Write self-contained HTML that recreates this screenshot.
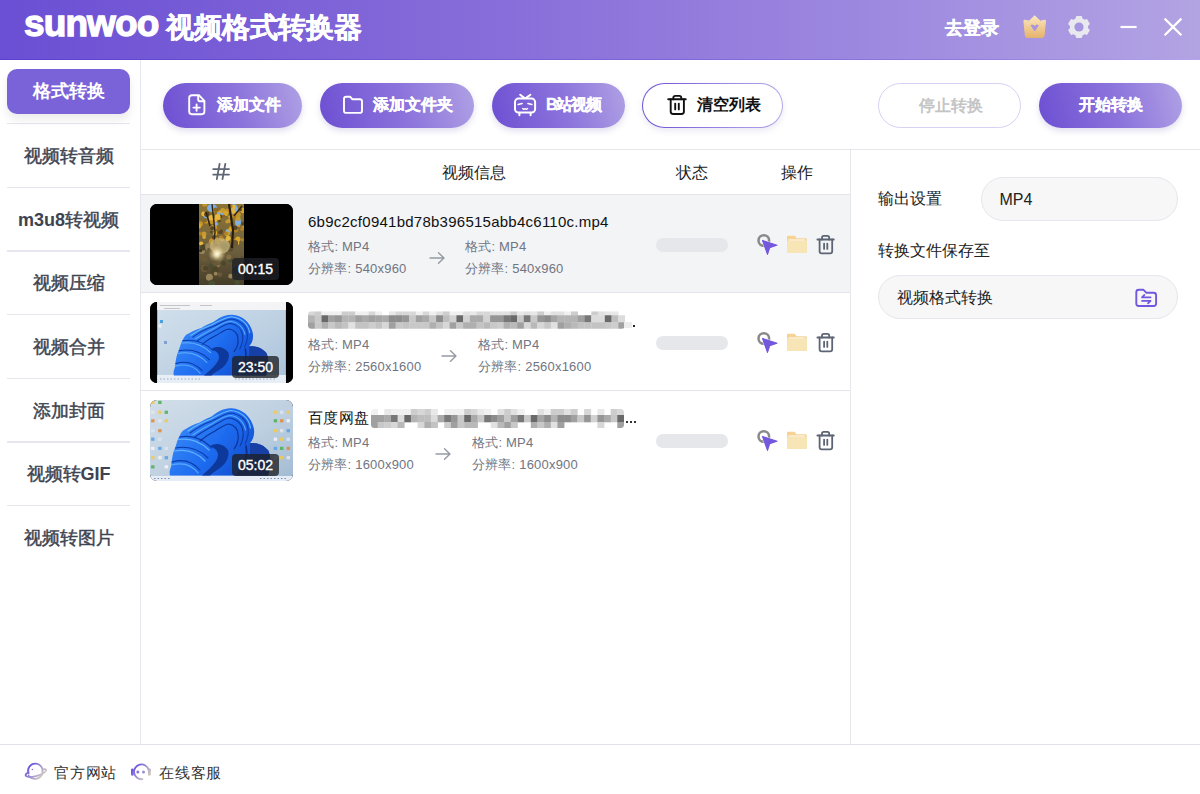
<!DOCTYPE html>
<html><head><meta charset="utf-8">
<style>
*{margin:0;padding:0;box-sizing:border-box}
html,body{width:1200px;height:794px;overflow:hidden;background:#fff;font-family:"Liberation Sans",sans-serif;position:relative}
.abs{position:absolute}
#hdr{left:0;top:0;width:1200px;height:60px;background:linear-gradient(90deg,#6b4fd4 0%,#8a70da 45%,#9f8be0 75%,#b2a3e3 100%)}
#hdr:after{content:"";position:absolute;left:0;top:59px;width:1200px;height:1px;background:linear-gradient(90deg,#5a3ecf,#7a62d8 50%,#8f7ade 80%,#b4a6ea)}
.logo{left:24px;top:2px;color:#fff;font-weight:bold;font-size:37px;line-height:44px;letter-spacing:-0.9px;white-space:nowrap;-webkit-text-stroke:1.3px #fff}
.title{left:166px;top:12px;color:#fff;font-weight:bold;font-size:28px;white-space:nowrap;line-height:32px;-webkit-text-stroke:0.4px #fff}
.login{left:945px;top:17px;color:#fff;font-weight:bold;font-size:18px;line-height:22px;-webkit-text-stroke:0.4px #fff}
#side{left:0;top:60px;width:141px;height:684px;border-right:1px solid #e6e6ee}
.nav{left:7px;width:123px;height:64px;text-align:center;font-size:18px;font-weight:500;color:#3d4350;-webkit-text-stroke:0.45px #3d4350;line-height:66px}
.nav.act{top:9px;height:45px;line-height:45px;background:#7a62d8;color:#fff;font-weight:bold;-webkit-text-stroke:0;border-radius:10px;border:none;box-shadow:0 6px 10px rgba(0,0,0,0.08)}
.btn{top:83px;height:45px;border-radius:23px;color:#fff;font-size:16px;font-weight:bold;background:linear-gradient(75deg,#6c4fd2 0%,#8c74dc 55%,#b0a1e4 100%);box-shadow:0 3px 6px rgba(90,70,160,0.18);white-space:nowrap}
.btn span{position:absolute;top:12px;line-height:20px;-webkit-text-stroke:0.3px #fff}
svg{display:block}
.btn svg{position:absolute}
.obtn{top:83px;height:45px;border-radius:23px;background:#fff;white-space:nowrap}
.th{top:164px;font-size:16px;color:#222;line-height:18px}
.row{left:141px;width:709px;height:98px;border-bottom:1.5px solid #e3e5ea}
.thumb{left:9px;top:9px;width:143px;height:81px;border-radius:7px;overflow:hidden;background:#000}
.fname{left:167px;top:17px;font-size:15px;color:#111;line-height:20px;white-space:nowrap;letter-spacing:0.25px}
.meta{font-size:13px;color:#707582;line-height:16px;white-space:nowrap;letter-spacing:0.2px}
.dur{position:absolute;left:82px;top:54px;width:47px;height:22px;border-radius:4px;background:rgba(30,32,38,0.78);color:#fff;font-size:14px;line-height:22px;text-align:center;-webkit-text-stroke:0.35px #fff}
.prog{left:515px;top:43px;width:72px;height:14px;border-radius:7px;background:#e5e7eb}
.act svg{position:absolute}
#rp{left:850px;top:149px;width:350px;height:595px;border-left:1.5px solid #e5e7eb}
.lbl{font-size:16px;color:#222;line-height:20px;white-space:nowrap}
.inp{height:44px;border-radius:22px;background:#f7f7f8;border:1px solid #e6e6ec}
#foot{left:0;top:744px;width:1200px;height:50px;border-top:1.5px solid #e2e2ec}
.ft{top:764px;font-size:15px;color:#333;line-height:18px;letter-spacing:0.8px}
</style></head><body>
<svg width="0" height="0" style="position:absolute"><defs>
<filter id="blur1" x="-5%" y="-30%" width="110%" height="160%"><feGaussianBlur stdDeviation="0.6"/></filter>
<linearGradient id="crownG" x1="0" y1="0" x2="0" y2="1"><stop offset="0" stop-color="#fbe7bf"/><stop offset="1" stop-color="#e6b46e"/></linearGradient>
<linearGradient id="ftG" gradientUnits="userSpaceOnUse" x1="6" y1="5" x2="25" y2="22"><stop offset="0.2" stop-color="#6f55dc"/><stop offset="0.55" stop-color="#a99bd0"/><stop offset="0.9" stop-color="#dcd8b8"/></linearGradient>
</defs></svg>

<div id="hdr" class="abs">
  <div class="abs logo">sunwoo</div>
  <div class="abs title">视频格式转换器</div>
  <div class="abs login">去登录</div>
  <svg class="abs" style="left:1015px;top:10px" width="40" height="35" viewBox="0 0 40 35">
    <path d="M9.4 10.2 Q12 10.4 14 11.2 Q17 8.4 19.7 5.8 Q22.4 8.4 25.4 11.2 Q27.4 10.4 30 10.2 Q30.6 10.2 30.5 10.8 L29 25.8 Q28.8 27.4 27.2 27.4 H12.2 Q10.6 27.4 10.4 25.8 L8.9 10.8 Q8.8 10.2 9.4 10.2 Z" fill="url(#crownG)" stroke="url(#crownG)" stroke-width="1" stroke-linejoin="round"/>
    <path d="M16.4 15.4 L19.7 20.4 L23 15.4 L21.2 15.4 L19.7 17.2 L18.2 15.4 Z" fill="#a795e2" stroke="#a795e2" stroke-width="1.3" stroke-linejoin="round"/>
  </svg>
  <svg class="abs" style="left:1066px;top:14px" width="26" height="26" viewBox="-13 -13 26 26">
    <g fill="#e8e8ee">
      <path id="gear" d="M4.00 -6.93 L2.60 -7.56 L2.10 -9.88 L-2.10 -9.88 L-2.60 -7.56 L-4.00 -6.93 L-5.25 -6.04 L-7.51 -6.76 L-9.61 -3.12 L-7.85 -1.53 L-8.00 0.00 L-7.85 1.53 L-9.61 3.12 L-7.51 6.76 L-5.25 6.04 L-4.00 6.93 L-2.60 7.56 L-2.10 9.88 L2.10 9.88 L2.60 7.56 L4.00 6.93 L5.25 6.04 L7.51 6.76 L9.61 3.12 L7.85 1.53 L8.00 0.00 L7.85 -1.53 L9.61 -3.12 L7.51 -6.76 L5.25 -6.04 Z" stroke="#e8e8ee" stroke-width="2.2" stroke-linejoin="round"/>
    </g>
    <circle r="4.6" fill="#a696e2"/>
  </svg>
  <svg class="abs" style="left:1115px;top:15px" width="75" height="28" viewBox="0 0 75 28">
    <path d="M5.5 12 H21.6" stroke="#fff" stroke-width="2.2"/>
    <path d="M49.6 3.6 L66.4 20.2 M66.4 3.6 L49.6 20.2" stroke="#fff" stroke-width="2.2"/>
  </svg>
</div>

<div id="side" class="abs">
  <div class="abs" style="left:7px;top:63.0px;width:123px;height:1.3px;background:#e6e7ee"></div><div class="abs" style="left:7px;top:126.7px;width:123px;height:1.3px;background:#e6e7ee"></div><div class="abs" style="left:7px;top:190.3px;width:123px;height:1.3px;background:#e6e7ee"></div><div class="abs" style="left:7px;top:254.0px;width:123px;height:1.3px;background:#e6e7ee"></div><div class="abs" style="left:7px;top:317.7px;width:123px;height:1.3px;background:#e6e7ee"></div><div class="abs" style="left:7px;top:381.4px;width:123px;height:1.3px;background:#e6e7ee"></div><div class="abs" style="left:7px;top:445.0px;width:123px;height:1.3px;background:#e6e7ee"></div>
  <div class="abs nav act">格式转换</div>
  <div class="abs nav" style="top:63px">视频转音频</div>
  <div class="abs nav" style="top:127px"><b style="-webkit-text-stroke:0">m3u8</b>转视频</div>
  <div class="abs nav" style="top:190px">视频压缩</div>
  <div class="abs nav" style="top:254px">视频合并</div>
  <div class="abs nav" style="top:318px">添加封面</div>
  <div class="abs nav" style="top:381px">视频转<b style="-webkit-text-stroke:0">GIF</b></div>
  <div class="abs nav" style="top:445px;border-bottom:none">视频转图片</div>
</div>

<div class="abs btn" style="left:163px;width:139px">
  <svg style="left:20px;top:7px" width="30" height="30" viewBox="0 0 30 30" fill="none" stroke="#fff" stroke-width="1.9" stroke-linejoin="round" stroke-linecap="round">
    <path d="M9 5.2 H15.9 L21.4 10.9 V21.6 Q21.4 24.2 18.8 24.2 H8.8 Q6.2 24.2 6.2 21.6 V7.8 Q6.2 5.2 9 5.2 Z"/>
    <path d="M15.2 5.6 V9.6 Q15.2 11.3 16.9 11.3 H21"/>
    <path d="M13.6 14.4 V20.8 M10.4 17.6 H16.8"/>
  </svg>
  <span style="left:54px">添加文件</span></div>
<div class="abs btn" style="left:320px;width:154px">
  <svg style="left:18px;top:7px" width="30" height="30" viewBox="0 0 30 30" fill="none" stroke="#fff" stroke-width="1.9" stroke-linejoin="round">
    <path d="M6 9 Q6 6.8 8.2 6.8 H12.3 L14.4 9.3 H21.8 Q24 9.3 24 11.5 V20.7 Q24 22.9 21.8 22.9 H8.2 Q6 22.9 6 20.7 Z"/>
  </svg>
  <span style="left:53px">添加文件夹</span></div>
<div class="abs btn" style="left:492px;width:133px">
  <svg style="left:18px;top:7px" width="30" height="30" viewBox="0 0 30 30" fill="none" stroke="#fff" stroke-width="2" stroke-linecap="round" stroke-linejoin="round">
    <rect x="5" y="8.6" width="20.1" height="14" rx="3.5"/>
    <path d="M10.2 4.7 L14.2 7.9 M20.4 4.7 L16.2 7.9"/>
    <path d="M8.2 14.5 L12 13.5 M18 13.5 L21.8 14.5" stroke-width="1.7"/>
    <path d="M12.6 18.4 L13.8 19.4 L15.1 18.6 L16.4 19.4 L17.6 18.4" stroke-width="1.3"/>
    <path d="M9.4 23 V25.2 M20.6 23 V25.2" stroke-width="2"/>
  </svg>
  <span style="left:54px;letter-spacing:-1.2px">B站视频</span></div>
<div class="abs obtn" style="left:642px;width:141px;border:1.6px solid transparent;background:linear-gradient(#fff,#fff) padding-box,linear-gradient(90deg,#6a4ed6,#9c88e4 60%,#b4a6ea) border-box;box-shadow:0 3px 6px rgba(90,70,160,0.12);color:#111;font-size:16px;font-weight:bold">
  <svg class="abs" style="left:18.5px;top:5.5px" width="30" height="30" viewBox="0 0 30 30" fill="none" stroke="#111" stroke-width="1.9" stroke-linecap="round" stroke-linejoin="round">
    <path d="M6.2 9.3 H23.8"/>
    <path d="M11.3 9.3 V8 Q11.3 5.9 13.4 5.9 H17.2 Q19.3 5.9 19.3 8 V9.3"/>
    <path d="M8.7 9.3 V21.5 Q8.7 24 11.2 24 H19.4 Q21.9 24 21.9 21.5 V9.3"/>
    <path d="M13.2 13.6 V19.4 M16.8 13.6 V19.4"/>
  </svg>
  <span class="abs" style="left:54px;top:11px;line-height:20px">清空列表</span></div>
<div class="abs obtn" style="left:878px;width:143px;border:1px solid #d9d0f5;color:#c4c4c4;font-size:16px;font-weight:bold"><span class="abs" style="left:40px;top:12px;line-height:20px">停止转换</span></div>
<div class="abs btn" style="left:1039px;width:143px"><span style="left:40px">开始转换</span></div>

<div class="abs" style="left:141px;top:148.5px;width:1059px;height:1.5px;background:#e5e7eb"></div>
<div class="abs" style="left:141px;top:193.5px;width:709px;height:1.5px;background:#e3e5ea"></div>
<svg class="abs" style="left:200px;top:155px" width="40" height="35" viewBox="0 0 40 35" stroke="#5f6675" stroke-width="1.8" stroke-linecap="round">
  <path d="M19.6 8.8 L16.8 24.2 M25.3 8.8 L22.5 24.2 M13.2 14.1 H29 M13.2 19.6 H29"/>
</svg>
<div class="abs th" style="left:442px">视频信息</div>
<div class="abs th" style="left:676px">状态</div>
<div class="abs th" style="left:781px">操作</div>

<div class="abs row" style="top:195px;background:#f3f4f6">
  <div class="abs thumb"><svg width="143" height="81" viewBox="0 0 143 81">
<defs>
<linearGradient id="au" x1="0" y1="0" x2="0" y2="1"><stop offset="0" stop-color="#8f7632"/><stop offset="0.35" stop-color="#7c6a3a"/><stop offset="0.6" stop-color="#6a5c3c"/><stop offset="1" stop-color="#403a26"/></linearGradient>
<radialGradient id="sun"><stop offset="0" stop-color="#fffcec"/><stop offset="0.3" stop-color="#f6e8b8" stop-opacity="0.9"/><stop offset="1" stop-color="#c8b070" stop-opacity="0"/></radialGradient>
<filter id="tb1" x="0" y="0" width="143" height="81" filterUnits="userSpaceOnUse"><feGaussianBlur stdDeviation="0.65"/></filter>
<clipPath id="strip"><rect x="49" y="0" width="45" height="81"/></clipPath>
</defs>
<rect width="143" height="81" fill="#000"/>
<g clip-path="url(#strip)"><g filter="url(#tb1)">
<rect x="40" y="-5" width="60" height="90" fill="url(#au)"/>
<ellipse cx="62" cy="4" rx="5" ry="4" fill="#7fb0e6"/><ellipse cx="70" cy="10" rx="3" ry="3" fill="#7fb0e6"/><ellipse cx="84" cy="6" rx="4" ry="6" fill="#7fb0e6"/><ellipse cx="88" cy="18" rx="3" ry="5" fill="#7fb0e6"/><ellipse cx="66" cy="20" rx="2" ry="2" fill="#7fb0e6"/><ellipse cx="78" cy="28" rx="2.5" ry="3" fill="#7fb0e6"/><ellipse cx="56" cy="14" rx="2" ry="3" fill="#7fb0e6"/>
<circle cx="77.0" cy="29.7" r="2.5" fill="#c89a30"/><circle cx="82.3" cy="36.9" r="1.2" fill="#e6b83c"/><circle cx="83.9" cy="10.0" r="1.3" fill="#c4942a"/><circle cx="54.1" cy="18.8" r="1.6" fill="#8a6a2a"/><circle cx="53.6" cy="10.0" r="2.4" fill="#e6b83c"/><circle cx="61.6" cy="36.7" r="2.4" fill="#c4942a"/><circle cx="83.3" cy="2.9" r="2.2" fill="#e6b83c"/><circle cx="54.7" cy="0.1" r="2.6" fill="#c4942a"/><circle cx="83.8" cy="38.4" r="1.5" fill="#c4942a"/><circle cx="62.0" cy="38.5" r="2.1" fill="#5a4420"/><circle cx="77.2" cy="7.3" r="2.7" fill="#c4942a"/><circle cx="92.5" cy="35.7" r="1.7" fill="#b08224"/><circle cx="67.7" cy="37.4" r="1.6" fill="#b08224"/><circle cx="62.6" cy="24.1" r="1.2" fill="#5a4420"/><circle cx="80.8" cy="2.6" r="1.8" fill="#b08224"/><circle cx="70.6" cy="12.6" r="2.0" fill="#5a4420"/><circle cx="56.9" cy="10.2" r="2.7" fill="#5a4420"/><circle cx="65.1" cy="16.2" r="2.1" fill="#e6b83c"/><circle cx="65.5" cy="23.1" r="1.2" fill="#d8a82c"/><circle cx="80.8" cy="24.9" r="2.7" fill="#d8a82c"/><circle cx="83.0" cy="37.2" r="2.7" fill="#b08224"/><circle cx="72.1" cy="35.7" r="1.6" fill="#e6b83c"/><circle cx="53.9" cy="29.9" r="2.5" fill="#c89a30"/><circle cx="62.3" cy="17.3" r="2.8" fill="#c4942a"/><circle cx="64.3" cy="24.4" r="2.7" fill="#b08224"/><circle cx="61.4" cy="28.1" r="1.3" fill="#5a4420"/><circle cx="63.3" cy="7.1" r="1.3" fill="#c4942a"/><circle cx="81.5" cy="12.4" r="2.0" fill="#5a4420"/><circle cx="51.2" cy="39.5" r="2.1" fill="#e6b83c"/><circle cx="50.4" cy="29.6" r="1.8" fill="#b08224"/><circle cx="69.5" cy="16.9" r="1.3" fill="#5a4420"/><circle cx="50.5" cy="19.7" r="2.5" fill="#c4942a"/><circle cx="93.2" cy="22.6" r="1.4" fill="#c89a30"/><circle cx="67.6" cy="6.8" r="1.8" fill="#d8a82c"/><circle cx="87.0" cy="11.8" r="1.9" fill="#8a6a2a"/><circle cx="87.4" cy="39.0" r="1.9" fill="#e6b83c"/><circle cx="80.0" cy="12.7" r="1.6" fill="#e6b83c"/><circle cx="67.2" cy="5.9" r="1.8" fill="#8a6a2a"/><circle cx="92.2" cy="25.1" r="2.0" fill="#b08224"/><circle cx="57.1" cy="19.7" r="2.0" fill="#8a6a2a"/><circle cx="88.0" cy="14.5" r="2.5" fill="#c89a30"/><circle cx="65.0" cy="23.5" r="1.3" fill="#b08224"/><circle cx="65.4" cy="28.2" r="1.6" fill="#e6b83c"/><circle cx="60.9" cy="39.2" r="2.3" fill="#b08224"/><circle cx="78.2" cy="23.2" r="1.2" fill="#8a6a2a"/><circle cx="83.8" cy="13.0" r="1.6" fill="#b08224"/><circle cx="85.8" cy="25.9" r="2.5" fill="#b08224"/><circle cx="61.3" cy="13.8" r="2.7" fill="#e6b83c"/><circle cx="64.8" cy="33.7" r="2.6" fill="#5a4420"/><circle cx="69.2" cy="14.6" r="1.7" fill="#c4942a"/><circle cx="72.8" cy="6.6" r="2.5" fill="#c89a30"/><circle cx="70.5" cy="27.7" r="2.4" fill="#5a4420"/><circle cx="67.7" cy="24.7" r="2.7" fill="#8a6a2a"/><circle cx="79.0" cy="16.8" r="2.2" fill="#c89a30"/><circle cx="88.0" cy="10.8" r="2.8" fill="#c4942a"/><circle cx="56.2" cy="17.6" r="2.2" fill="#c4942a"/><circle cx="83.2" cy="7.2" r="2.3" fill="#e6b83c"/><circle cx="93.1" cy="6.6" r="2.6" fill="#d8a82c"/><circle cx="63.3" cy="7.3" r="1.5" fill="#d8a82c"/><circle cx="67.7" cy="14.0" r="2.3" fill="#d8a82c"/><circle cx="75.6" cy="9.5" r="2.6" fill="#d8a82c"/><circle cx="64.8" cy="38.1" r="2.6" fill="#c89a30"/><circle cx="54.2" cy="33.3" r="1.8" fill="#d8a82c"/><circle cx="73.7" cy="12.1" r="1.7" fill="#8a6a2a"/><circle cx="64.3" cy="23.2" r="2.7" fill="#c89a30"/><circle cx="54.8" cy="16.4" r="2.1" fill="#8a6a2a"/><circle cx="65.6" cy="5.7" r="2.2" fill="#8a6a2a"/><circle cx="70.5" cy="8.0" r="1.4" fill="#d8a82c"/><circle cx="64.8" cy="35.7" r="1.2" fill="#d8a82c"/><circle cx="63.7" cy="36.7" r="2.1" fill="#b08224"/><circle cx="77.3" cy="35.7" r="1.8" fill="#e6b83c"/><circle cx="93.0" cy="19.7" r="2.0" fill="#5a4420"/><circle cx="66.1" cy="38.4" r="2.7" fill="#8a6a2a"/><circle cx="75.7" cy="29.6" r="1.7" fill="#b08224"/><circle cx="67.7" cy="12.8" r="2.8" fill="#e6b83c"/><circle cx="90.8" cy="5.7" r="1.2" fill="#5a4420"/><circle cx="77.0" cy="17.7" r="1.7" fill="#c89a30"/><circle cx="55.1" cy="15.7" r="2.0" fill="#8a6a2a"/><circle cx="61.3" cy="37.4" r="2.5" fill="#c4942a"/><circle cx="71.1" cy="33.8" r="2.4" fill="#b08224"/><circle cx="62.2" cy="24.3" r="2.0" fill="#5a4420"/><circle cx="87.9" cy="35.2" r="2.6" fill="#d8a82c"/><circle cx="83.2" cy="12.0" r="2.1" fill="#b08224"/><circle cx="76.6" cy="29.3" r="1.2" fill="#b08224"/><circle cx="65.2" cy="29.8" r="2.1" fill="#d8a82c"/><circle cx="49.1" cy="22.1" r="2.3" fill="#d8a82c"/><circle cx="89.0" cy="21.8" r="1.2" fill="#c89a30"/><circle cx="85.3" cy="23.8" r="2.3" fill="#5a4420"/><circle cx="78.2" cy="34.3" r="2.5" fill="#e6b83c"/><circle cx="66.6" cy="34.1" r="1.5" fill="#b08224"/>
<circle cx="69.9" cy="70.6" r="2.3" fill="#6a5a38"/><circle cx="80.3" cy="56.6" r="2.2" fill="#4a5030"/><circle cx="70.3" cy="51.4" r="1.9" fill="#98845a"/><circle cx="73.7" cy="59.4" r="2.3" fill="#4c442a"/><circle cx="68.2" cy="61.3" r="1.6" fill="#98845a"/><circle cx="59.4" cy="73.2" r="3.5" fill="#98845a"/><circle cx="91.4" cy="52.3" r="2.6" fill="#6a5a38"/><circle cx="93.9" cy="68.2" r="1.6" fill="#4a5030"/><circle cx="54.5" cy="64.4" r="3.6" fill="#6a5a38"/><circle cx="81.1" cy="43.8" r="2.2" fill="#3c3822"/><circle cx="55.7" cy="64.3" r="2.5" fill="#4c442a"/><circle cx="52.0" cy="47.2" r="2.9" fill="#98845a"/><circle cx="66.1" cy="41.1" r="1.6" fill="#5a4e30"/><circle cx="54.3" cy="55.1" r="3.1" fill="#6a5a38"/><circle cx="68.4" cy="51.5" r="3.0" fill="#3c3822"/><circle cx="64.9" cy="66.2" r="3.8" fill="#4c442a"/><circle cx="80.4" cy="44.5" r="3.1" fill="#5a4e30"/><circle cx="62.1" cy="78.5" r="2.9" fill="#4c442a"/><circle cx="60.8" cy="61.7" r="2.1" fill="#4a5030"/><circle cx="61.8" cy="79.9" r="3.5" fill="#4a5030"/><circle cx="65.7" cy="69.7" r="1.9" fill="#98845a"/><circle cx="49.8" cy="52.7" r="2.9" fill="#6a5a38"/><circle cx="53.1" cy="43.4" r="3.0" fill="#4c442a"/><circle cx="66.5" cy="57.9" r="3.9" fill="#6a5a38"/><circle cx="84.8" cy="39.3" r="3.3" fill="#6a5a38"/><circle cx="87.2" cy="78.6" r="2.6" fill="#4a5030"/><circle cx="59.0" cy="43.0" r="3.9" fill="#98845a"/><circle cx="71.1" cy="47.1" r="3.3" fill="#3c3822"/><circle cx="64.9" cy="48.1" r="2.3" fill="#5a4e30"/><circle cx="80.7" cy="72.2" r="2.4" fill="#98845a"/><circle cx="86.4" cy="65.9" r="3.5" fill="#3c3822"/><circle cx="92.3" cy="53.6" r="1.6" fill="#5a4e30"/><circle cx="58.7" cy="45.8" r="1.7" fill="#6a5a38"/><circle cx="50.5" cy="46.7" r="1.6" fill="#3c3822"/><circle cx="78.8" cy="53.0" r="2.6" fill="#847046"/><circle cx="89.0" cy="64.6" r="2.6" fill="#3c3822"/><circle cx="69.8" cy="46.2" r="3.1" fill="#6a5a38"/><circle cx="65.9" cy="54.6" r="3.7" fill="#4c442a"/><circle cx="73.8" cy="42.7" r="3.5" fill="#4a5030"/><circle cx="61.9" cy="48.1" r="2.7" fill="#6a5a38"/>
<path d="M62 0 L65 28 L64 40 M84 12 L92 2 M56 8 L60 22" stroke="#2e2212" stroke-width="1.4" fill="none"/><path d="M79 0 L83 26 L82 44" stroke="#2a1e10" stroke-width="2.2" fill="none"/>
<ellipse cx="70" cy="42" rx="10" ry="8" fill="#c8b47c" opacity="0.75"/>
<circle cx="67" cy="50" r="9" fill="url(#sun)"/>
</g></g>
</svg><div class="dur">00:15</div></div>
  <div class="abs fname">6b9c2cf0941bd78b396515abb4c6110c.mp4</div>
  <div class="abs meta" style="left:167px;top:44px">格式: MP4</div>
  <div class="abs meta" style="left:167px;top:66px">分辨率: 540x960</div>
  <svg class="abs" style="left:286px;top:55px" width="20" height="16" viewBox="0 0 20 16" fill="none" stroke="#959aa4" stroke-width="1.4" stroke-linecap="round" stroke-linejoin="round"><path d="M3 8 H17 M11.5 2.8 L17 8 L11.5 13.2"/></svg>
  <div class="abs meta" style="left:324px;top:44px">格式: MP4</div>
  <div class="abs meta" style="left:324px;top:66px">分辨率: 540x960</div>
  <div class="abs prog"></div>
  <div class="act">
<svg style="left:610px;top:33px" width="32" height="32" viewBox="0 0 32 32">
  <circle cx="12.8" cy="12.5" r="5.3" fill="none" stroke="#8a8a8a" stroke-width="2.5"/>
  <path d="M11.3 12.3 L26.3 17.2 L18.8 19.8 L16.5 26.8 Z" fill="#7357dd" stroke="#fff" stroke-width="1.6" stroke-linejoin="round" paint-order="stroke"/>
  <path d="M11.3 12.3 L26.3 17.2 L18.8 19.8 L16.5 26.8 Z" fill="#7357dd" stroke="#7357dd" stroke-width="0.8" stroke-linejoin="round"/>
</svg>
<svg style="left:641px;top:33px" width="30" height="30" viewBox="0 0 30 30">
  <path d="M5 8.5 Q5 7.7 5.8 7.7 H12.8 L14.5 10.2 H24 Q24.7 10.2 24.7 11 V24.3 Q24.7 25 24 25 H5.8 Q5 25 5 24.3 Z" fill="#f5d394"/>
  <rect x="5" y="12.8" width="19.7" height="12.2" rx="0.6" fill="#f7e5b5"/>
  <path d="M6.5 12 H23" stroke="#fbf3e0" stroke-width="1.4"/>
</svg>
<svg style="left:641px;top:33px" width="60" height="30" viewBox="0 0 60 30" fill="none" stroke="#5d6574" stroke-width="1.8" stroke-linecap="round" stroke-linejoin="round">
  <path d="M35.4 11.5 H51.8"/>
  <path d="M40 11.5 V9.7 Q40 7.9 41.8 7.9 H45.4 Q47.2 7.9 47.2 9.7 V11.5"/>
  <path d="M37.6 11.5 V23.3 Q37.6 25.4 39.7 25.4 H48.1 Q50.2 25.4 50.2 23.3 V11.5"/>
  <path d="M42.1 15.6 V20.9 M45.3 15.6 V20.9"/>
</svg>
</div>
</div>
<div class="abs row" style="top:293px">
  <div class="abs thumb"><svg width="143" height="81" viewBox="0 0 143 81">
<defs><linearGradient id="wp2" x1="0" y1="0" x2="1" y2="1"><stop offset="0" stop-color="#d3e0ec"/><stop offset="0.6" stop-color="#bcd0e2"/><stop offset="1" stop-color="#a9c2da"/></linearGradient>
<filter id="tb" x="0" y="0" width="143" height="81" filterUnits="userSpaceOnUse"><feGaussianBlur stdDeviation="0.55"/></filter><linearGradient id="bloomG" gradientUnits="userSpaceOnUse" x1="25" y1="15" x2="105" y2="75"><stop offset="0" stop-color="#3a8cfa"/><stop offset="0.5" stop-color="#1f6cf0"/><stop offset="1" stop-color="#1046c8"/></linearGradient></defs>
<rect width="143" height="81" fill="#000"/>
<g filter="url(#tb)">
<rect x="7.2" y="0" width="128.7" height="81" fill="url(#wp2)"/>
<rect x="7.2" y="0" width="128.7" height="8" fill="#f4f4f6"/>
<path d="M10 3.5 H40 M50 3.5 H62 M14 6.5 H30" stroke="#b8b8c0" stroke-width="0.8"/>
<rect x="7.2" y="73" width="128.7" height="8" fill="#e8eef6"/>
<path d="M10 77 H50 M85 77 H125" stroke="#9aa8c0" stroke-width="1.2" stroke-dasharray="1.5 2"/>
<rect x="10" y="18" width="3" height="3" fill="#4aa0e0"/><rect x="8.5" y="22.5" width="3" height="3" fill="#f0f0f0"/><rect x="14" y="39" width="3" height="3" fill="#80a0d0"/>
<g transform="translate(25,12.8) scale(0.941,0.905) translate(-21.2,-8.3)">
<path d="M82 8.3 C92 9 101 16 103.8 28 C105 35 103 40 99.7 43.4 C106 42 114 45 118.3 50.6 C121 56 121 66 118 75.4 L20 75.4 C19 72 20 70 21.2 66 C22 58 23 52 25.3 47.6 C27 42 28 38 29.5 36.2 C31 32 33 30 35.7 29 C40 26 45 24 49.1 22.8 C54 20 58 18 61.5 16.6 C66 13 70 10.5 73 9.5 C76 8.6 79 8.3 82 8.3 Z" fill="url(#bloomG)"/>
<path d="M99.7 43.4 C106 42 114 45 118.3 50.6 C121 56 121 66 118 75.4 L86 75.4 C96 68 102 56 99.7 43.4 Z" fill="#173fa6"/>
<path d="M60 46 C66 42 74 44 78 50 C80 56 76 64 70 68 C66 71 62 73 60 75.4 L52 75.4 C58 70 68 62 68 55 C68 50 64 48 60 46 Z" fill="#0c3494" opacity="0.9"/>
<g fill="none" stroke-linecap="round">
<path d="M40 33 C48 27 56 23 62 21 C70 17 76 13 81 13 C90 14 97 20 98 29 C99 35 97 40 95 44" stroke="#0d3eb0" stroke-width="1.1"/>
<path d="M45 37 C52 32 58 29 63 26 C70 22 75 18 80 18 C87 19 92 24 93 31 C94 37 92 42 90 46" stroke="#0b3aa8" stroke-width="1.1"/>
<path d="M50 41 C56 36 61 33 65 31 C70 28 75 24 79 24 C84 25 88 29 88 34 C89 40 87 45 84 49" stroke="#0a359c" stroke-width="1.2"/>
<path d="M38 31 C46 25.5 54 21.5 61 19 C68 15 75 11 81 10.5 C91 11.5 99 18 100.5 28" stroke="#6ab8ff" stroke-width="1.2"/>
<path d="M43 35 C50 30 57 26.5 62.5 23.5 C69 19.5 75 15.5 80.5 15.5 C88 16.5 94 22 95.5 30" stroke="#58a8ff" stroke-width="1.1"/>
<path d="M29.5 37 C40 35 52 38 62 48" stroke="#0b3aa8" stroke-width="1.1"/>
<path d="M25.5 48 C36 46 48 48 58 58" stroke="#0b3aa8" stroke-width="1.1"/>
<path d="M22 62 C32 59 42 61 50 70" stroke="#0b3aa8" stroke-width="1.1"/>
<path d="M28.5 39.5 C39 38 50 41 59 50" stroke="#62b0ff" stroke-width="1.2"/>
<path d="M24.5 51 C35 49 46 51 55 61" stroke="#62b0ff" stroke-width="1.2"/>
<path d="M21.5 65 C31 62.5 41 64 48 73" stroke="#5aaaff" stroke-width="1.2"/>
<path d="M96 46 C98 56 95 66 88 74" stroke="#0c2f88" stroke-width="1.6"/>
</g>
</g>
</g>
</svg><div class="dur">23:50</div></div>
  <svg class="abs" style="left:167px;top:17.5px;overflow:visible" width="317" height="18" viewBox="0 0 317.0 17.5"><defs><clipPath id="mc7"><rect x="0" y="0" width="317.0" height="17.5" rx="3.5"/></clipPath></defs><g clip-path="url(#mc7)" filter="url(#blur1)"><rect x="0.0" y="0.0" width="7.0" height="4.3" fill="rgb(215,215,215)"/><rect x="6.7" y="0.0" width="7.0" height="4.3" fill="rgb(205,205,205)"/><rect x="13.5" y="0.0" width="7.0" height="4.3" fill="rgb(240,240,240)"/><rect x="20.2" y="0.0" width="7.0" height="4.3" fill="rgb(240,240,240)"/><rect x="27.0" y="0.0" width="7.0" height="4.3" fill="rgb(240,240,240)"/><rect x="33.7" y="0.0" width="7.0" height="4.3" fill="rgb(205,205,205)"/><rect x="40.5" y="0.0" width="7.0" height="4.3" fill="rgb(205,205,205)"/><rect x="47.2" y="0.0" width="7.0" height="4.3" fill="rgb(240,240,240)"/><rect x="54.0" y="0.0" width="7.0" height="4.3" fill="rgb(240,240,240)"/><rect x="60.7" y="0.0" width="7.0" height="4.3" fill="rgb(215,215,215)"/><rect x="67.4" y="0.0" width="7.0" height="4.3" fill="rgb(240,240,240)"/><rect x="80.9" y="0.0" width="7.0" height="4.3" fill="rgb(232,232,232)"/><rect x="87.7" y="0.0" width="7.0" height="4.3" fill="rgb(215,215,215)"/><rect x="94.4" y="0.0" width="7.0" height="4.3" fill="rgb(215,215,215)"/><rect x="101.2" y="0.0" width="7.0" height="4.3" fill="rgb(215,215,215)"/><rect x="107.9" y="0.0" width="7.0" height="4.3" fill="rgb(240,240,240)"/><rect x="114.7" y="0.0" width="7.0" height="4.3" fill="rgb(215,215,215)"/><rect x="121.4" y="0.0" width="7.0" height="4.3" fill="rgb(240,240,240)"/><rect x="128.1" y="0.0" width="7.0" height="4.3" fill="rgb(225,225,225)"/><rect x="134.9" y="0.0" width="7.0" height="4.3" fill="rgb(205,205,205)"/><rect x="141.6" y="0.0" width="7.0" height="4.3" fill="rgb(240,240,240)"/><rect x="148.4" y="0.0" width="7.0" height="4.3" fill="rgb(240,240,240)"/><rect x="155.1" y="0.0" width="7.0" height="4.3" fill="rgb(225,225,225)"/><rect x="161.9" y="0.0" width="7.0" height="4.3" fill="rgb(232,232,232)"/><rect x="168.6" y="0.0" width="7.0" height="4.3" fill="rgb(215,215,215)"/><rect x="175.4" y="0.0" width="7.0" height="4.3" fill="rgb(215,215,215)"/><rect x="182.1" y="0.0" width="7.0" height="4.3" fill="rgb(225,225,225)"/><rect x="188.9" y="0.0" width="7.0" height="4.3" fill="rgb(225,225,225)"/><rect x="195.6" y="0.0" width="7.0" height="4.3" fill="rgb(225,225,225)"/><rect x="202.3" y="0.0" width="7.0" height="4.3" fill="rgb(205,205,205)"/><rect x="209.1" y="0.0" width="7.0" height="4.3" fill="rgb(232,232,232)"/><rect x="215.8" y="0.0" width="7.0" height="4.3" fill="rgb(225,225,225)"/><rect x="222.6" y="0.0" width="7.0" height="4.3" fill="rgb(232,232,232)"/><rect x="229.3" y="0.0" width="7.0" height="4.3" fill="rgb(205,205,205)"/><rect x="236.1" y="0.0" width="7.0" height="4.3" fill="rgb(240,240,240)"/><rect x="242.8" y="0.0" width="7.0" height="4.3" fill="rgb(225,225,225)"/><rect x="249.6" y="0.0" width="7.0" height="4.3" fill="rgb(225,225,225)"/><rect x="256.3" y="0.0" width="7.0" height="4.3" fill="rgb(240,240,240)"/><rect x="263.0" y="0.0" width="7.0" height="4.3" fill="rgb(205,205,205)"/><rect x="283.3" y="0.0" width="7.0" height="4.3" fill="rgb(205,205,205)"/><rect x="290.0" y="0.0" width="7.0" height="4.3" fill="rgb(225,225,225)"/><rect x="296.8" y="0.0" width="7.0" height="4.3" fill="rgb(232,232,232)"/><rect x="303.5" y="0.0" width="7.0" height="4.3" fill="rgb(232,232,232)"/><rect x="0.0" y="4.0" width="7.0" height="7.3" fill="rgb(180,180,180)"/><rect x="6.7" y="4.0" width="7.0" height="7.3" fill="rgb(200,200,200)"/><rect x="13.5" y="4.0" width="7.0" height="7.3" fill="rgb(105,105,105)"/><rect x="20.2" y="4.0" width="7.0" height="7.3" fill="rgb(160,160,160)"/><rect x="27.0" y="4.0" width="7.0" height="7.3" fill="rgb(150,150,150)"/><rect x="33.7" y="4.0" width="7.0" height="7.3" fill="rgb(180,180,180)"/><rect x="40.5" y="4.0" width="7.0" height="7.3" fill="rgb(180,180,180)"/><rect x="47.2" y="4.0" width="7.0" height="7.3" fill="rgb(160,160,160)"/><rect x="54.0" y="4.0" width="7.0" height="7.3" fill="rgb(170,170,170)"/><rect x="60.7" y="4.0" width="7.0" height="7.3" fill="rgb(160,160,160)"/><rect x="67.4" y="4.0" width="7.0" height="7.3" fill="rgb(165,165,165)"/><rect x="74.2" y="4.0" width="7.0" height="7.3" fill="rgb(170,170,170)"/><rect x="80.9" y="4.0" width="7.0" height="7.3" fill="rgb(140,140,140)"/><rect x="87.7" y="4.0" width="7.0" height="7.3" fill="rgb(140,140,140)"/><rect x="94.4" y="4.0" width="7.0" height="7.3" fill="rgb(150,150,150)"/><rect x="101.2" y="4.0" width="7.0" height="7.3" fill="rgb(200,200,200)"/><rect x="107.9" y="4.0" width="7.0" height="7.3" fill="rgb(160,160,160)"/><rect x="114.7" y="4.0" width="7.0" height="7.3" fill="rgb(170,170,170)"/><rect x="121.4" y="4.0" width="7.0" height="7.3" fill="rgb(200,200,200)"/><rect x="128.1" y="4.0" width="7.0" height="7.3" fill="rgb(140,140,140)"/><rect x="134.9" y="4.0" width="7.0" height="7.3" fill="rgb(190,190,190)"/><rect x="141.6" y="4.0" width="7.0" height="7.3" fill="rgb(210,210,210)"/><rect x="148.4" y="4.0" width="7.0" height="7.3" fill="rgb(105,105,105)"/><rect x="155.1" y="4.0" width="7.0" height="7.3" fill="rgb(210,210,210)"/><rect x="161.9" y="4.0" width="7.0" height="7.3" fill="rgb(170,170,170)"/><rect x="168.6" y="4.0" width="7.0" height="7.3" fill="rgb(170,170,170)"/><rect x="175.4" y="4.0" width="7.0" height="7.3" fill="rgb(210,210,210)"/><rect x="182.1" y="4.0" width="7.0" height="7.3" fill="rgb(150,150,150)"/><rect x="188.9" y="4.0" width="7.0" height="7.3" fill="rgb(150,150,150)"/><rect x="195.6" y="4.0" width="7.0" height="7.3" fill="rgb(120,120,120)"/><rect x="202.3" y="4.0" width="7.0" height="7.3" fill="rgb(105,105,105)"/><rect x="209.1" y="4.0" width="7.0" height="7.3" fill="rgb(200,200,200)"/><rect x="215.8" y="4.0" width="7.0" height="7.3" fill="rgb(120,120,120)"/><rect x="222.6" y="4.0" width="7.0" height="7.3" fill="rgb(200,200,200)"/><rect x="229.3" y="4.0" width="7.0" height="7.3" fill="rgb(150,150,150)"/><rect x="236.1" y="4.0" width="7.0" height="7.3" fill="rgb(140,140,140)"/><rect x="242.8" y="4.0" width="7.0" height="7.3" fill="rgb(165,165,165)"/><rect x="249.6" y="4.0" width="7.0" height="7.3" fill="rgb(180,180,180)"/><rect x="256.3" y="4.0" width="7.0" height="7.3" fill="rgb(180,180,180)"/><rect x="263.0" y="4.0" width="7.0" height="7.3" fill="rgb(180,180,180)"/><rect x="269.8" y="4.0" width="7.0" height="7.3" fill="rgb(160,160,160)"/><rect x="276.5" y="4.0" width="7.0" height="7.3" fill="rgb(120,120,120)"/><rect x="283.3" y="4.0" width="7.0" height="7.3" fill="rgb(220,220,220)"/><rect x="290.0" y="4.0" width="7.0" height="7.3" fill="rgb(220,220,220)"/><rect x="296.8" y="4.0" width="7.0" height="7.3" fill="rgb(105,105,105)"/><rect x="303.5" y="4.0" width="7.0" height="7.3" fill="rgb(190,190,190)"/><rect x="310.3" y="4.0" width="7.0" height="7.3" fill="rgb(220,220,220)"/><rect x="0.0" y="11.0" width="7.0" height="6.8" fill="rgb(160,160,160)"/><rect x="6.7" y="11.0" width="7.0" height="6.8" fill="rgb(200,200,200)"/><rect x="13.5" y="11.0" width="7.0" height="6.8" fill="rgb(175,175,175)"/><rect x="20.2" y="11.0" width="7.0" height="6.8" fill="rgb(200,200,200)"/><rect x="27.0" y="11.0" width="7.0" height="6.8" fill="rgb(185,185,185)"/><rect x="33.7" y="11.0" width="7.0" height="6.8" fill="rgb(195,195,195)"/><rect x="40.5" y="11.0" width="7.0" height="6.8" fill="rgb(225,225,225)"/><rect x="47.2" y="11.0" width="7.0" height="6.8" fill="rgb(195,195,195)"/><rect x="54.0" y="11.0" width="7.0" height="6.8" fill="rgb(195,195,195)"/><rect x="60.7" y="11.0" width="7.0" height="6.8" fill="rgb(205,205,205)"/><rect x="67.4" y="11.0" width="7.0" height="6.8" fill="rgb(195,195,195)"/><rect x="74.2" y="11.0" width="7.0" height="6.8" fill="rgb(215,215,215)"/><rect x="80.9" y="11.0" width="7.0" height="6.8" fill="rgb(160,160,160)"/><rect x="87.7" y="11.0" width="7.0" height="6.8" fill="rgb(200,200,200)"/><rect x="94.4" y="11.0" width="7.0" height="6.8" fill="rgb(195,195,195)"/><rect x="101.2" y="11.0" width="7.0" height="6.8" fill="rgb(200,200,200)"/><rect x="107.9" y="11.0" width="7.0" height="6.8" fill="rgb(200,200,200)"/><rect x="114.7" y="11.0" width="7.0" height="6.8" fill="rgb(200,200,200)"/><rect x="121.4" y="11.0" width="7.0" height="6.8" fill="rgb(175,175,175)"/><rect x="128.1" y="11.0" width="7.0" height="6.8" fill="rgb(195,195,195)"/><rect x="134.9" y="11.0" width="7.0" height="6.8" fill="rgb(215,215,215)"/><rect x="141.6" y="11.0" width="7.0" height="6.8" fill="rgb(160,160,160)"/><rect x="148.4" y="11.0" width="7.0" height="6.8" fill="rgb(200,200,200)"/><rect x="155.1" y="11.0" width="7.0" height="6.8" fill="rgb(175,175,175)"/><rect x="161.9" y="11.0" width="7.0" height="6.8" fill="rgb(175,175,175)"/><rect x="168.6" y="11.0" width="7.0" height="6.8" fill="rgb(195,195,195)"/><rect x="175.4" y="11.0" width="7.0" height="6.8" fill="rgb(185,185,185)"/><rect x="182.1" y="11.0" width="7.0" height="6.8" fill="rgb(200,200,200)"/><rect x="188.9" y="11.0" width="7.0" height="6.8" fill="rgb(205,205,205)"/><rect x="195.6" y="11.0" width="7.0" height="6.8" fill="rgb(175,175,175)"/><rect x="202.3" y="11.0" width="7.0" height="6.8" fill="rgb(185,185,185)"/><rect x="209.1" y="11.0" width="7.0" height="6.8" fill="rgb(160,160,160)"/><rect x="215.8" y="11.0" width="7.0" height="6.8" fill="rgb(215,215,215)"/><rect x="222.6" y="11.0" width="7.0" height="6.8" fill="rgb(185,185,185)"/><rect x="229.3" y="11.0" width="7.0" height="6.8" fill="rgb(215,215,215)"/><rect x="236.1" y="11.0" width="7.0" height="6.8" fill="rgb(200,200,200)"/><rect x="242.8" y="11.0" width="7.0" height="6.8" fill="rgb(225,225,225)"/><rect x="249.6" y="11.0" width="7.0" height="6.8" fill="rgb(160,160,160)"/><rect x="256.3" y="11.0" width="7.0" height="6.8" fill="rgb(175,175,175)"/><rect x="263.0" y="11.0" width="7.0" height="6.8" fill="rgb(185,185,185)"/><rect x="269.8" y="11.0" width="7.0" height="6.8" fill="rgb(195,195,195)"/><rect x="276.5" y="11.0" width="7.0" height="6.8" fill="rgb(195,195,195)"/><rect x="283.3" y="11.0" width="7.0" height="6.8" fill="rgb(195,195,195)"/><rect x="290.0" y="11.0" width="7.0" height="6.8" fill="rgb(195,195,195)"/><rect x="296.8" y="11.0" width="7.0" height="6.8" fill="rgb(200,200,200)"/><rect x="303.5" y="11.0" width="7.0" height="6.8" fill="rgb(205,205,205)"/><rect x="310.3" y="11.0" width="7.0" height="6.8" fill="rgb(160,160,160)"/></g></svg><div class="abs" style="left:483px;top:29px;width:8px;height:6px;background:#ececec"></div><div class="abs" style="left:492px;top:32px;width:2px;height:2px;background:#222"></div>
  <div class="abs meta" style="left:167px;top:44px">格式: MP4</div>
  <div class="abs meta" style="left:167px;top:66px">分辨率: 2560x1600</div>
  <svg class="abs" style="left:298px;top:55px" width="20" height="16" viewBox="0 0 20 16" fill="none" stroke="#959aa4" stroke-width="1.4" stroke-linecap="round" stroke-linejoin="round"><path d="M3 8 H17 M11.5 2.8 L17 8 L11.5 13.2"/></svg>
  <div class="abs meta" style="left:337px;top:44px">格式: MP4</div>
  <div class="abs meta" style="left:337px;top:66px">分辨率: 2560x1600</div>
  <div class="abs prog"></div>
  <div class="act">
<svg style="left:610px;top:33px" width="32" height="32" viewBox="0 0 32 32">
  <circle cx="12.8" cy="12.5" r="5.3" fill="none" stroke="#8a8a8a" stroke-width="2.5"/>
  <path d="M11.3 12.3 L26.3 17.2 L18.8 19.8 L16.5 26.8 Z" fill="#7357dd" stroke="#fff" stroke-width="1.6" stroke-linejoin="round" paint-order="stroke"/>
  <path d="M11.3 12.3 L26.3 17.2 L18.8 19.8 L16.5 26.8 Z" fill="#7357dd" stroke="#7357dd" stroke-width="0.8" stroke-linejoin="round"/>
</svg>
<svg style="left:641px;top:33px" width="30" height="30" viewBox="0 0 30 30">
  <path d="M5 8.5 Q5 7.7 5.8 7.7 H12.8 L14.5 10.2 H24 Q24.7 10.2 24.7 11 V24.3 Q24.7 25 24 25 H5.8 Q5 25 5 24.3 Z" fill="#f5d394"/>
  <rect x="5" y="12.8" width="19.7" height="12.2" rx="0.6" fill="#f7e5b5"/>
  <path d="M6.5 12 H23" stroke="#fbf3e0" stroke-width="1.4"/>
</svg>
<svg style="left:641px;top:33px" width="60" height="30" viewBox="0 0 60 30" fill="none" stroke="#5d6574" stroke-width="1.8" stroke-linecap="round" stroke-linejoin="round">
  <path d="M35.4 11.5 H51.8"/>
  <path d="M40 11.5 V9.7 Q40 7.9 41.8 7.9 H45.4 Q47.2 7.9 47.2 9.7 V11.5"/>
  <path d="M37.6 11.5 V23.3 Q37.6 25.4 39.7 25.4 H48.1 Q50.2 25.4 50.2 23.3 V11.5"/>
  <path d="M42.1 15.6 V20.9 M45.3 15.6 V20.9"/>
</svg>
</div>
</div>
<div class="abs row" style="top:391px;border-bottom:none">
  <div class="abs thumb"><svg width="143" height="81" viewBox="0 0 143 81">
<defs><linearGradient id="wp3" x1="0" y1="0" x2="1" y2="1"><stop offset="0" stop-color="#d2dee9"/><stop offset="0.55" stop-color="#bed0e1"/><stop offset="1" stop-color="#a2bbd3"/></linearGradient></defs>
<g filter="url(#tb)">
<rect width="143" height="81" fill="url(#wp3)"/>
<rect x="1.1" y="0.7999999999999998" width="3.4" height="3.2" fill="#f2c94c" opacity="0.85"/><rect x="1.1" y="10.700000000000001" width="3.4" height="3.2" fill="#e8e8e8" opacity="0.85"/><rect x="1.1" y="19.2" width="3.4" height="3.2" fill="#e08a3a" opacity="0.85"/><rect x="1.1" y="29.099999999999998" width="3.4" height="3.2" fill="#d9e6f2" opacity="0.85"/><rect x="1.1" y="37.6" width="3.4" height="3.2" fill="#5aa0e6" opacity="0.85"/><rect x="1.1" y="46.8" width="3.4" height="3.2" fill="#f5f5f5" opacity="0.85"/><rect x="1.1" y="56.1" width="3.4" height="3.2" fill="#f2c94c" opacity="0.85"/><rect x="1.1" y="65.30000000000001" width="3.4" height="3.2" fill="#4caf50" opacity="0.85"/><rect x="8.200000000000001" y="0.7999999999999998" width="3.4" height="3.2" fill="#4caf50" opacity="0.85"/><rect x="8.200000000000001" y="10.700000000000001" width="3.4" height="3.2" fill="#f2c94c" opacity="0.85"/><rect x="8.200000000000001" y="19.2" width="3.4" height="3.2" fill="#e8e8e8" opacity="0.85"/><rect x="8.200000000000001" y="29.099999999999998" width="3.4" height="3.2" fill="#e08a3a" opacity="0.85"/><rect x="8.200000000000001" y="37.6" width="3.4" height="3.2" fill="#d9e6f2" opacity="0.85"/><rect x="8.200000000000001" y="46.8" width="3.4" height="3.2" fill="#5aa0e6" opacity="0.85"/><rect x="8.200000000000001" y="56.1" width="3.4" height="3.2" fill="#f5f5f5" opacity="0.85"/><rect x="14.6" y="10.700000000000001" width="3.4" height="3.2" fill="#4caf50" opacity="0.85"/><rect x="14.6" y="19.2" width="3.4" height="3.2" fill="#f2c94c" opacity="0.85"/><rect x="14.6" y="46.8" width="3.4" height="3.2" fill="#d9e6f2" opacity="0.85"/><rect x="14.6" y="56.1" width="3.4" height="3.2" fill="#5aa0e6" opacity="0.85"/><rect x="14.6" y="65.30000000000001" width="3.4" height="3.2" fill="#f5f5f5" opacity="0.85"/><rect x="123.7" y="10.700000000000001" width="3.4" height="3.2" fill="#f2c94c" opacity="0.85"/><rect x="123.7" y="19.2" width="3.4" height="3.2" fill="#4caf50" opacity="0.85"/><rect x="123.7" y="29.099999999999998" width="3.4" height="3.2" fill="#f2c94c" opacity="0.85"/><rect x="123.7" y="37.6" width="3.4" height="3.2" fill="#f5f5f5" opacity="0.85"/><rect x="123.7" y="46.8" width="3.4" height="3.2" fill="#5aa0e6" opacity="0.85"/><rect x="123.7" y="56.1" width="3.4" height="3.2" fill="#d9e6f2" opacity="0.85"/><rect x="130.0" y="10.700000000000001" width="3.4" height="3.2" fill="#d9e6f2" opacity="0.85"/><rect x="130.0" y="19.2" width="3.4" height="3.2" fill="#e08a3a" opacity="0.85"/><rect x="130.0" y="29.099999999999998" width="3.4" height="3.2" fill="#e8e8e8" opacity="0.85"/><rect x="130.0" y="37.6" width="3.4" height="3.2" fill="#f2c94c" opacity="0.85"/><rect x="130.0" y="46.8" width="3.4" height="3.2" fill="#4caf50" opacity="0.85"/><rect x="130.0" y="56.1" width="3.4" height="3.2" fill="#f2c94c" opacity="0.85"/><rect x="136.6" y="10.700000000000001" width="3.4" height="3.2" fill="#f2c94c" opacity="0.85"/><rect x="136.6" y="19.2" width="3.4" height="3.2" fill="#f5f5f5" opacity="0.85"/><rect x="136.6" y="29.099999999999998" width="3.4" height="3.2" fill="#5aa0e6" opacity="0.85"/><rect x="136.6" y="37.6" width="3.4" height="3.2" fill="#d9e6f2" opacity="0.85"/><rect x="136.6" y="46.8" width="3.4" height="3.2" fill="#e08a3a" opacity="0.85"/><rect x="136.6" y="56.1" width="3.4" height="3.2" fill="#e8e8e8" opacity="0.85"/>
<g>
<path d="M82 8.3 C92 9 101 16 103.8 28 C105 35 103 40 99.7 43.4 C106 42 114 45 118.3 50.6 C121 56 121 66 118 75.4 L20 75.4 C19 72 20 70 21.2 66 C22 58 23 52 25.3 47.6 C27 42 28 38 29.5 36.2 C31 32 33 30 35.7 29 C40 26 45 24 49.1 22.8 C54 20 58 18 61.5 16.6 C66 13 70 10.5 73 9.5 C76 8.6 79 8.3 82 8.3 Z" fill="url(#bloomG)"/>
<path d="M99.7 43.4 C106 42 114 45 118.3 50.6 C121 56 121 66 118 75.4 L86 75.4 C96 68 102 56 99.7 43.4 Z" fill="#173fa6"/>
<path d="M60 46 C66 42 74 44 78 50 C80 56 76 64 70 68 C66 71 62 73 60 75.4 L52 75.4 C58 70 68 62 68 55 C68 50 64 48 60 46 Z" fill="#0c3494" opacity="0.9"/>
<g fill="none" stroke-linecap="round">
<path d="M40 33 C48 27 56 23 62 21 C70 17 76 13 81 13 C90 14 97 20 98 29 C99 35 97 40 95 44" stroke="#0d3eb0" stroke-width="1.1"/>
<path d="M45 37 C52 32 58 29 63 26 C70 22 75 18 80 18 C87 19 92 24 93 31 C94 37 92 42 90 46" stroke="#0b3aa8" stroke-width="1.1"/>
<path d="M50 41 C56 36 61 33 65 31 C70 28 75 24 79 24 C84 25 88 29 88 34 C89 40 87 45 84 49" stroke="#0a359c" stroke-width="1.2"/>
<path d="M38 31 C46 25.5 54 21.5 61 19 C68 15 75 11 81 10.5 C91 11.5 99 18 100.5 28" stroke="#6ab8ff" stroke-width="1.2"/>
<path d="M43 35 C50 30 57 26.5 62.5 23.5 C69 19.5 75 15.5 80.5 15.5 C88 16.5 94 22 95.5 30" stroke="#58a8ff" stroke-width="1.1"/>
<path d="M29.5 37 C40 35 52 38 62 48" stroke="#0b3aa8" stroke-width="1.1"/>
<path d="M25.5 48 C36 46 48 48 58 58" stroke="#0b3aa8" stroke-width="1.1"/>
<path d="M22 62 C32 59 42 61 50 70" stroke="#0b3aa8" stroke-width="1.1"/>
<path d="M28.5 39.5 C39 38 50 41 59 50" stroke="#62b0ff" stroke-width="1.2"/>
<path d="M24.5 51 C35 49 46 51 55 61" stroke="#62b0ff" stroke-width="1.2"/>
<path d="M21.5 65 C31 62.5 41 64 48 73" stroke="#5aaaff" stroke-width="1.2"/>
<path d="M96 46 C98 56 95 66 88 74" stroke="#0c2f88" stroke-width="1.6"/>
</g>
</g>
<rect x="0" y="76" width="143" height="5" fill="#e6edf6"/>
<path d="M4 78.5 H20 M110 78.5 H138" stroke="#7a90b0" stroke-width="1.1" stroke-dasharray="1.5 2"/>
</g>
</svg><div class="dur">05:02</div></div>
  <div class="abs fname">百度网盘</div>
  <svg class="abs" style="left:230px;top:18px;overflow:visible" width="253" height="19" viewBox="0 0 253.0 19.0"><defs><clipPath id="mc11"><rect x="0" y="0" width="253.0" height="19.0" rx="3.5"/></clipPath></defs><g clip-path="url(#mc11)" filter="url(#blur1)"><rect x="0.0" y="0.0" width="7.0" height="6.3" fill="rgb(240,240,240)"/><rect x="13.3" y="0.0" width="7.0" height="6.3" fill="rgb(232,232,232)"/><rect x="20.0" y="0.0" width="7.0" height="6.3" fill="rgb(240,240,240)"/><rect x="26.6" y="0.0" width="7.0" height="6.3" fill="rgb(240,240,240)"/><rect x="33.3" y="0.0" width="7.0" height="6.3" fill="rgb(240,240,240)"/><rect x="39.9" y="0.0" width="7.0" height="6.3" fill="rgb(205,205,205)"/><rect x="46.6" y="0.0" width="7.0" height="6.3" fill="rgb(215,215,215)"/><rect x="53.3" y="0.0" width="7.0" height="6.3" fill="rgb(205,205,205)"/><rect x="59.9" y="0.0" width="7.0" height="6.3" fill="rgb(232,232,232)"/><rect x="73.2" y="0.0" width="7.0" height="6.3" fill="rgb(240,240,240)"/><rect x="79.9" y="0.0" width="7.0" height="6.3" fill="rgb(240,240,240)"/><rect x="86.6" y="0.0" width="7.0" height="6.3" fill="rgb(240,240,240)"/><rect x="93.2" y="0.0" width="7.0" height="6.3" fill="rgb(205,205,205)"/><rect x="99.9" y="0.0" width="7.0" height="6.3" fill="rgb(215,215,215)"/><rect x="106.5" y="0.0" width="7.0" height="6.3" fill="rgb(232,232,232)"/><rect x="113.2" y="0.0" width="7.0" height="6.3" fill="rgb(240,240,240)"/><rect x="126.5" y="0.0" width="7.0" height="6.3" fill="rgb(225,225,225)"/><rect x="133.2" y="0.0" width="7.0" height="6.3" fill="rgb(205,205,205)"/><rect x="139.8" y="0.0" width="7.0" height="6.3" fill="rgb(225,225,225)"/><rect x="146.5" y="0.0" width="7.0" height="6.3" fill="rgb(240,240,240)"/><rect x="166.4" y="0.0" width="7.0" height="6.3" fill="rgb(225,225,225)"/><rect x="173.1" y="0.0" width="7.0" height="6.3" fill="rgb(240,240,240)"/><rect x="179.8" y="0.0" width="7.0" height="6.3" fill="rgb(205,205,205)"/><rect x="186.4" y="0.0" width="7.0" height="6.3" fill="rgb(205,205,205)"/><rect x="193.1" y="0.0" width="7.0" height="6.3" fill="rgb(225,225,225)"/><rect x="199.7" y="0.0" width="7.0" height="6.3" fill="rgb(205,205,205)"/><rect x="213.1" y="0.0" width="7.0" height="6.3" fill="rgb(215,215,215)"/><rect x="226.4" y="0.0" width="7.0" height="6.3" fill="rgb(232,232,232)"/><rect x="239.7" y="0.0" width="7.0" height="6.3" fill="rgb(205,205,205)"/><rect x="246.3" y="0.0" width="7.0" height="6.3" fill="rgb(215,215,215)"/><rect x="0.0" y="6.0" width="7.0" height="7.3" fill="rgb(160,160,160)"/><rect x="6.7" y="6.0" width="7.0" height="7.3" fill="rgb(160,160,160)"/><rect x="13.3" y="6.0" width="7.0" height="7.3" fill="rgb(170,170,170)"/><rect x="20.0" y="6.0" width="7.0" height="7.3" fill="rgb(120,120,120)"/><rect x="26.6" y="6.0" width="7.0" height="7.3" fill="rgb(220,220,220)"/><rect x="33.3" y="6.0" width="7.0" height="7.3" fill="rgb(105,105,105)"/><rect x="39.9" y="6.0" width="7.0" height="7.3" fill="rgb(180,180,180)"/><rect x="46.6" y="6.0" width="7.0" height="7.3" fill="rgb(190,190,190)"/><rect x="53.3" y="6.0" width="7.0" height="7.3" fill="rgb(190,190,190)"/><rect x="59.9" y="6.0" width="7.0" height="7.3" fill="rgb(220,220,220)"/><rect x="66.6" y="6.0" width="7.0" height="7.3" fill="rgb(170,170,170)"/><rect x="73.2" y="6.0" width="7.0" height="7.3" fill="rgb(120,120,120)"/><rect x="79.9" y="6.0" width="7.0" height="7.3" fill="rgb(150,150,150)"/><rect x="86.6" y="6.0" width="7.0" height="7.3" fill="rgb(200,200,200)"/><rect x="93.2" y="6.0" width="7.0" height="7.3" fill="rgb(105,105,105)"/><rect x="99.9" y="6.0" width="7.0" height="7.3" fill="rgb(170,170,170)"/><rect x="106.5" y="6.0" width="7.0" height="7.3" fill="rgb(200,200,200)"/><rect x="113.2" y="6.0" width="7.0" height="7.3" fill="rgb(120,120,120)"/><rect x="119.8" y="6.0" width="7.0" height="7.3" fill="rgb(140,140,140)"/><rect x="126.5" y="6.0" width="7.0" height="7.3" fill="rgb(160,160,160)"/><rect x="133.2" y="6.0" width="7.0" height="7.3" fill="rgb(200,200,200)"/><rect x="139.8" y="6.0" width="7.0" height="7.3" fill="rgb(160,160,160)"/><rect x="146.5" y="6.0" width="7.0" height="7.3" fill="rgb(120,120,120)"/><rect x="153.1" y="6.0" width="7.0" height="7.3" fill="rgb(200,200,200)"/><rect x="159.8" y="6.0" width="7.0" height="7.3" fill="rgb(105,105,105)"/><rect x="166.4" y="6.0" width="7.0" height="7.3" fill="rgb(165,165,165)"/><rect x="173.1" y="6.0" width="7.0" height="7.3" fill="rgb(140,140,140)"/><rect x="179.8" y="6.0" width="7.0" height="7.3" fill="rgb(180,180,180)"/><rect x="186.4" y="6.0" width="7.0" height="7.3" fill="rgb(140,140,140)"/><rect x="193.1" y="6.0" width="7.0" height="7.3" fill="rgb(140,140,140)"/><rect x="199.7" y="6.0" width="7.0" height="7.3" fill="rgb(160,160,160)"/><rect x="206.4" y="6.0" width="7.0" height="7.3" fill="rgb(200,200,200)"/><rect x="213.1" y="6.0" width="7.0" height="7.3" fill="rgb(150,150,150)"/><rect x="219.7" y="6.0" width="7.0" height="7.3" fill="rgb(210,210,210)"/><rect x="226.4" y="6.0" width="7.0" height="7.3" fill="rgb(150,150,150)"/><rect x="233.0" y="6.0" width="7.0" height="7.3" fill="rgb(170,170,170)"/><rect x="239.7" y="6.0" width="7.0" height="7.3" fill="rgb(200,200,200)"/><rect x="246.3" y="6.0" width="7.0" height="7.3" fill="rgb(105,105,105)"/><rect x="0.0" y="13.0" width="7.0" height="6.3" fill="rgb(160,160,160)"/><rect x="6.7" y="13.0" width="7.0" height="6.3" fill="rgb(200,200,200)"/><rect x="13.3" y="13.0" width="7.0" height="6.3" fill="rgb(205,205,205)"/><rect x="20.0" y="13.0" width="7.0" height="6.3" fill="rgb(215,215,215)"/><rect x="26.6" y="13.0" width="7.0" height="6.3" fill="rgb(185,185,185)"/><rect x="46.6" y="13.0" width="7.0" height="6.3" fill="rgb(215,215,215)"/><rect x="53.3" y="13.0" width="7.0" height="6.3" fill="rgb(175,175,175)"/><rect x="59.9" y="13.0" width="7.0" height="6.3" fill="rgb(195,195,195)"/><rect x="73.2" y="13.0" width="7.0" height="6.3" fill="rgb(205,205,205)"/><rect x="79.9" y="13.0" width="7.0" height="6.3" fill="rgb(160,160,160)"/><rect x="86.6" y="13.0" width="7.0" height="6.3" fill="rgb(200,200,200)"/><rect x="93.2" y="13.0" width="7.0" height="6.3" fill="rgb(185,185,185)"/><rect x="99.9" y="13.0" width="7.0" height="6.3" fill="rgb(185,185,185)"/><rect x="119.8" y="13.0" width="7.0" height="6.3" fill="rgb(225,225,225)"/><rect x="126.5" y="13.0" width="7.0" height="6.3" fill="rgb(185,185,185)"/><rect x="133.2" y="13.0" width="7.0" height="6.3" fill="rgb(160,160,160)"/><rect x="139.8" y="13.0" width="7.0" height="6.3" fill="rgb(200,200,200)"/><rect x="159.8" y="13.0" width="7.0" height="6.3" fill="rgb(175,175,175)"/><rect x="166.4" y="13.0" width="7.0" height="6.3" fill="rgb(200,200,200)"/><rect x="173.1" y="13.0" width="7.0" height="6.3" fill="rgb(175,175,175)"/><rect x="179.8" y="13.0" width="7.0" height="6.3" fill="rgb(225,225,225)"/><rect x="186.4" y="13.0" width="7.0" height="6.3" fill="rgb(160,160,160)"/><rect x="226.4" y="13.0" width="7.0" height="6.3" fill="rgb(215,215,215)"/><rect x="246.3" y="13.0" width="7.0" height="6.3" fill="rgb(160,160,160)"/></g></svg><div class="abs" style="left:485px;top:30px;width:2px;height:2px;background:#333"></div><div class="abs" style="left:489px;top:30px;width:2px;height:2px;background:#333"></div><div class="abs" style="left:493px;top:30px;width:2px;height:2px;background:#333"></div>
  <div class="abs meta" style="left:167px;top:44px">格式: MP4</div>
  <div class="abs meta" style="left:167px;top:66px">分辨率: 1600x900</div>
  <svg class="abs" style="left:292px;top:55px" width="20" height="16" viewBox="0 0 20 16" fill="none" stroke="#959aa4" stroke-width="1.4" stroke-linecap="round" stroke-linejoin="round"><path d="M3 8 H17 M11.5 2.8 L17 8 L11.5 13.2"/></svg>
  <div class="abs meta" style="left:331px;top:44px">格式: MP4</div>
  <div class="abs meta" style="left:331px;top:66px">分辨率: 1600x900</div>
  <div class="abs prog"></div>
  <div class="act">
<svg style="left:610px;top:33px" width="32" height="32" viewBox="0 0 32 32">
  <circle cx="12.8" cy="12.5" r="5.3" fill="none" stroke="#8a8a8a" stroke-width="2.5"/>
  <path d="M11.3 12.3 L26.3 17.2 L18.8 19.8 L16.5 26.8 Z" fill="#7357dd" stroke="#fff" stroke-width="1.6" stroke-linejoin="round" paint-order="stroke"/>
  <path d="M11.3 12.3 L26.3 17.2 L18.8 19.8 L16.5 26.8 Z" fill="#7357dd" stroke="#7357dd" stroke-width="0.8" stroke-linejoin="round"/>
</svg>
<svg style="left:641px;top:33px" width="30" height="30" viewBox="0 0 30 30">
  <path d="M5 8.5 Q5 7.7 5.8 7.7 H12.8 L14.5 10.2 H24 Q24.7 10.2 24.7 11 V24.3 Q24.7 25 24 25 H5.8 Q5 25 5 24.3 Z" fill="#f5d394"/>
  <rect x="5" y="12.8" width="19.7" height="12.2" rx="0.6" fill="#f7e5b5"/>
  <path d="M6.5 12 H23" stroke="#fbf3e0" stroke-width="1.4"/>
</svg>
<svg style="left:641px;top:33px" width="60" height="30" viewBox="0 0 60 30" fill="none" stroke="#5d6574" stroke-width="1.8" stroke-linecap="round" stroke-linejoin="round">
  <path d="M35.4 11.5 H51.8"/>
  <path d="M40 11.5 V9.7 Q40 7.9 41.8 7.9 H45.4 Q47.2 7.9 47.2 9.7 V11.5"/>
  <path d="M37.6 11.5 V23.3 Q37.6 25.4 39.7 25.4 H48.1 Q50.2 25.4 50.2 23.3 V11.5"/>
  <path d="M42.1 15.6 V20.9 M45.3 15.6 V20.9"/>
</svg>
</div>
</div>

<div id="rp" class="abs"></div>
<div class="abs lbl" style="left:878px;top:189px">输出设置</div>
<div class="abs inp" style="left:981px;top:177px;width:197px"><span class="abs" style="left:17.5px;top:12px;font-size:16px;color:#222;line-height:20px">MP4</span></div>
<div class="abs lbl" style="left:878px;top:241px">转换文件保存至</div>
<div class="abs inp" style="left:878px;top:275px;width:300px"><span class="abs" style="left:18px;top:12px;font-size:16px;color:#222;line-height:20px">视频格式转换</span>
  <svg class="abs" style="left:251.5px;top:6.5px" width="32" height="30" viewBox="0 0 32 30" fill="none" stroke="#7357dd" stroke-width="1.9" stroke-linecap="round" stroke-linejoin="round">
    <path d="M5.3 9.3 Q5.3 6.8 7.8 6.8 H12.5 L15.5 9.8 H22.6 Q25.1 9.8 25.1 12.3 V20.5 Q25.1 23 22.6 23 H7.8 Q5.3 23 5.3 20.5 Z"/>
    <path d="M19.6 14.4 H11 L13.4 11.9 M11 17.8 H19.6 L17 20.4" stroke-width="1.7"/>
  </svg>
</div>

<div id="foot" class="abs"></div>
<svg class="abs" style="left:20px;top:758px" width="32" height="28" viewBox="0 0 32 28" fill="none" stroke="url(#ftG)" stroke-width="1.8" stroke-linecap="round">
  <path d="M8.6 15.6 A7.3 7.3 0 1 1 22.4 14.8"/>
  <path d="M8.4 14.2 Q4.6 16.6 6 18 Q8 20.2 16 18.2 Q24 16 26 12.6 Q26.8 11 24 11.2"/>
  <path d="M8.6 17.8 Q12.4 22 17 20.6 Q20.8 19.4 22.6 15.6"/>
  <circle cx="12.3" cy="11.5" r="0.7" fill="#7a62d8" stroke="none"/>
</svg>
<div class="abs ft" style="left:54px">官方网站</div>
<svg class="abs" style="left:126px;top:758px" width="32" height="28" viewBox="0 0 32 28" fill="none" stroke="url(#ftG)" stroke-width="1.8" stroke-linecap="round">
  <path d="M16.4 21.2 A7.4 7.4 0 1 1 22.6 11.8"/>
  <path d="M6.4 11.8 V16.4" stroke-width="2.8"/>
  <path d="M23.4 11.8 V16.2" stroke-width="3"/>
  <circle cx="11.8" cy="13.9" r="1.5" fill="#8a74d8" stroke="none"/>
  <circle cx="17.5" cy="13.9" r="1.5" fill="#9a8cd0" stroke="none"/>
</svg>
<div class="abs ft" style="left:159px">在线客服</div>
</body></html>
